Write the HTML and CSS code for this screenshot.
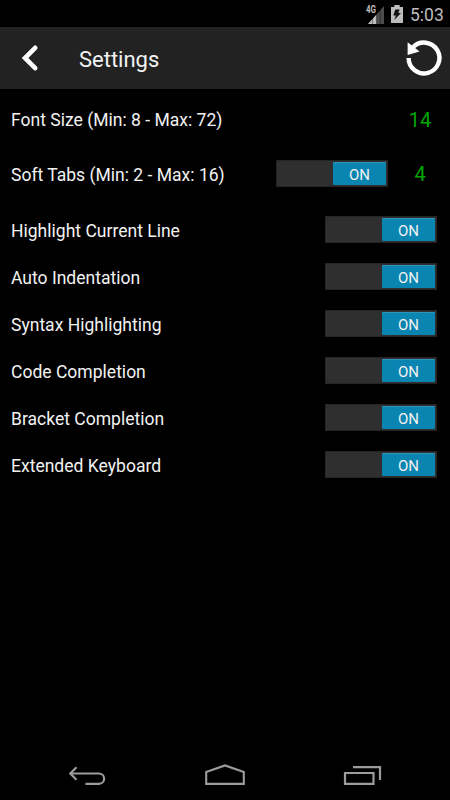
FILE: index.html
```html
<!DOCTYPE html>
<html>
<head>
  <meta charset="utf-8">
  <title>Settings</title>
  <link rel="stylesheet" href="styles.css">
</head>
<body>
  <div id="status-bar">
    <svg class="signal" width="20" height="20" viewBox="0 0 20 20">
      <path d="M3 19 L19 1 V19 Z" fill="#4c4c4c"/>
      <path d="M3 19 L11.5 9.5 V19 Z" fill="#bdbdbd"/>
      <path d="M7.5 12 V19 M11.5 8 V19 M15.2 4 V19" stroke="#000" stroke-opacity="0.45" stroke-width="0.8"/>
    </svg>
    <span class="network">4G</span>
    <svg class="battery" width="12" height="18" viewBox="0 0 12 18">
      <path d="M3.3 0 H8.7 V2 H12 V18 H0 V2 H3.3 Z" fill="#bdbdbd"/>
      <path d="M4.3 4.5 H8.6 L7.3 8 H10 L3.2 15 L4.9 10.5 H2.3 Z" fill="#111"/>
    </svg>
    <span class="clock">5:03</span>
  </div>

  <div id="header">
    <svg class="back" width="20" height="30" viewBox="0 0 20 30">
      <path d="M16.2 4.8 L6 15 L16.2 25.2" fill="none" stroke="#fff" stroke-width="4.6" stroke-linecap="round"/>
    </svg>
    <h1>Settings</h1>
    <svg class="reset" width="44" height="40" viewBox="0 0 44 40">
      <path d="M7.6 20 A15.4 15.4 0 1 0 12 9.2" fill="none" stroke="#fff" stroke-width="4.4"/>
      <path d="M6.6 4.2 L18.6 13.5 L6.6 17 Z" fill="#fff"/>
    </svg>
  </div>

  <div id="settings">
    <div class="row tall">
      <label>Font Size (Min: 8 - Max: 72)</label>
      <span class="value">14</span>
    </div>
    <div class="row tall tabs">
      <label>Soft Tabs (Min: 2 - Max: 16)</label>
      <div class="switch"><span>ON</span></div>
      <span class="value">4</span>
    </div>
    <div class="row">
      <label>Highlight Current Line</label>
      <div class="switch"><span>ON</span></div>
    </div>
    <div class="row">
      <label>Auto Indentation</label>
      <div class="switch"><span>ON</span></div>
    </div>
    <div class="row">
      <label>Syntax Highlighting</label>
      <div class="switch"><span>ON</span></div>
    </div>
    <div class="row">
      <label>Code Completion</label>
      <div class="switch"><span>ON</span></div>
    </div>
    <div class="row">
      <label>Bracket Completion</label>
      <div class="switch"><span>ON</span></div>
    </div>
    <div class="row">
      <label>Extended Keyboard</label>
      <div class="switch"><span>ON</span></div>
    </div>
  </div>

  <!-- Android navigation keys -->
  <div id="nav-bar">
    <svg width="40" height="24" viewBox="0 0 40 24">
      <path d="M3.5 10.5 H32 A5.1 5.1 0 0 1 32 20.8 H18.5" fill="none" stroke="#9c9c9c" stroke-width="2.2"/>
      <path d="M9.5 4.2 L3.3 10.5 L9.5 16.8" fill="none" stroke="#9c9c9c" stroke-width="2.2"/>
    </svg>
    <svg width="40" height="24" viewBox="0 0 40 24">
      <path d="M1.2 20.9 V8.9 L20 2.4 L38.8 8.9 V20.9 Z" fill="none" stroke="#9c9c9c" stroke-width="2.1"/>
    </svg>
    <svg width="40" height="24" viewBox="0 0 40 24">
      <path d="M3 10 H31.5 V20.9 H3 Z" fill="none" stroke="#9c9c9c" stroke-width="2.2"/>
      <path d="M11 4.2 H38 V17" fill="none" stroke="#9c9c9c" stroke-width="2.2"/>
    </svg>
  </div>
</body>
</html>
```
FILE: styles.css
```css
body {
  background-color: #000000;
  color: #f2f2f2;
  font-family: Roboto, sans-serif;
  margin: 0;
  height: 800px;
  display: flex;
  flex-direction: column;
  overflow: hidden;
}

#status-bar {
  position: relative;
  display: flex;
  align-items: center;
  justify-content: flex-end;
  height: 27px;
  padding-right: 7px;
  color: #bdbdbd;
}

.network {
  position: absolute;
  left: 366px;
  top: 4px;
  font-size: 10.5px;
  line-height: 12px;
  font-weight: bold;
  transform: scaleX(0.76);
  transform-origin: left;
}

.signal {
  margin: 2px 6px 0 0;
}

.battery {
  margin-right: 7px;
}

.clock {
  width: 33px;
  font-size: 17.5px;
  line-height: 27px;
  padding-top: 3px;
  white-space: nowrap;
}

#header {
  display: flex;
  align-items: center;
  height: 62px;
  padding: 0 5px 0 19px;
  background-color: #222222;
}

#header h1 {
  flex: 1;
  margin: 2px 0 0 40px;
  font-size: 22px;
  font-weight: normal;
}

#settings {
  flex: 1;
  padding: 3px 13px 0 11px;
}

.row {
  display: flex;
  align-items: center;
  height: 47px;
}

.row.tall {
  height: 55px;
}

.row.tabs {
  height: 54px;
  margin-bottom: 5px;
}

.row label {
  flex: 1;
  padding-top: 2px;
  font-size: 17.55px;
  white-space: nowrap;
}

.row.tall label {
  padding-top: 1px;
}

.value {
  width: 32px;
  margin-right: 1px;
  color: #00a800;
  font-size: 20px;
  text-align: center;
}

.tabs .value {
  margin-left: 16px;
}

.switch {
  box-sizing: border-box;
  display: flex;
  justify-content: flex-end;
  width: 112px;
  height: 27px;
  padding: 1px;
  border: 1px solid #242424;
  background-color: #2f2f2f;
}

.tabs .switch {
  margin-top: -1px;
}

.switch span {
  box-sizing: border-box;
  width: 53px;
  height: 23px;
  border-top: 1px solid #2b95ba;
  border-radius: 1px;
  background-color: #0a84b0;
  font-size: 15px;
  line-height: 24px;
  text-align: center;
}

#nav-bar {
  display: flex;
  align-items: center;
  justify-content: space-between;
  height: 50px;
  padding: 0 68px 0 67px;
}
```
